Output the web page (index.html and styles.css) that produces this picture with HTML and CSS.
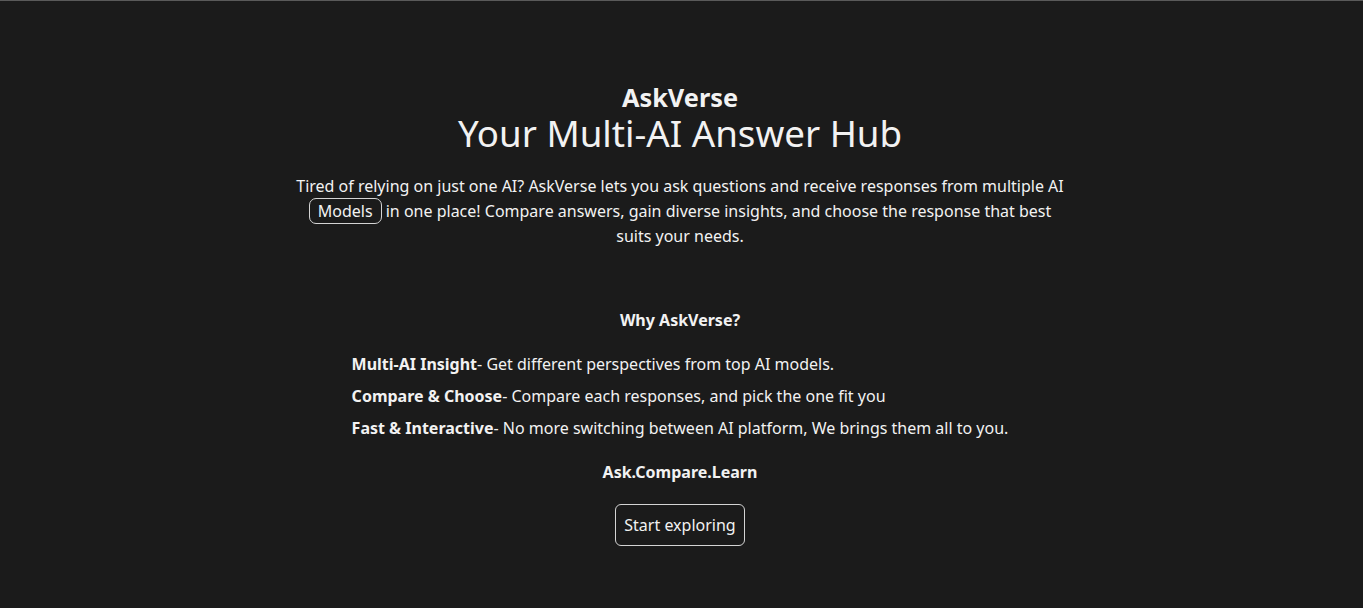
FILE: index.html
```html
<!DOCTYPE html>
<html lang="en">
<head>
<meta charset="utf-8">
<title>AskVerse</title>
<link rel="stylesheet" href="styles.css">
</head>
<body>
<main class="hero">
  <h2 class="brand">AskVerse</h2>
  <h1 class="title">Your Multi-AI Answer Hub</h1>
  <p class="intro">Tired of relying on just one AI? AskVerse lets you ask questions and receive responses from multiple AI <span class="pill">Models</span> in one place! Compare answers, gain diverse insights, and choose the response that best suits your needs.</p>
  <section class="why">
    <h3 class="why-title">Why AskVerse?</h3>
    <ul class="features">
      <li><strong>Multi-AI Insight</strong>- Get different perspectives from top AI models.</li>
      <li><strong>Compare &amp; Choose</strong>- Compare each responses, and pick the one fit you</li>
      <li><strong>Fast &amp; Interactive</strong>- No more switching between AI platform, We brings them all to you.</li>
    </ul>
    <p class="motto">Ask.Compare.Learn</p>
    <button class="cta">Start exploring</button>
  </section>
</main>
</body>
</html>
```
FILE: styles.css
```css
html, body {
  margin: 0;
  padding: 0;
}
body {
  background: #1b1b1b;
  color: #f2f2f2;
  font-family: "Noto Sans", "Open Sans", sans-serif;
  border-top: 1px solid #5a5a5a;
  min-height: 607px;
}
.hero {
  display: flex;
  flex-direction: column;
  align-items: center;
  text-align: center;
  padding-top: 81px;
  padding-right: 3px;
}
.brand {
  margin: 0;
  font-size: 25.3px;
  font-weight: 700;
  line-height: 30px;
}
.title {
  margin: 0;
  font-size: 36.7px;
  font-weight: 400;
  line-height: 42px;
}
.intro {
  width: 780px;
  margin: 20px 0 0;
  font-size: 16px;
  line-height: 25px;
}
.pill {
  border: 1px solid #d4d4d4;
  border-radius: 7px;
  padding: 1px 8px;
}
.why {
  margin-top: 59px;
  display: flex;
  flex-direction: column;
  align-items: center;
}
.why-title {
  margin: 0;
  font-size: 16px;
  font-weight: 700;
  line-height: 24px;
}
.features {
  list-style: none;
  padding: 0;
  margin: 20px 0 0;
  text-align: left;
  font-size: 16px;
  line-height: 24px;
  display: flex;
  flex-direction: column;
  gap: 8px;
}
.features strong {
  font-weight: 700;
}
.motto {
  margin: 20px 0 0;
  font-weight: 700;
  font-size: 16px;
  line-height: 24px;
}
.cta {
  margin-top: 20px;
  background: transparent;
  color: #f2f2f2;
  border: 1px solid #d4d4d4;
  border-radius: 6px;
  font-family: inherit;
  font-size: 16px;
  padding: 9px 8px;
  line-height: 22px;
  cursor: pointer;
}
```
